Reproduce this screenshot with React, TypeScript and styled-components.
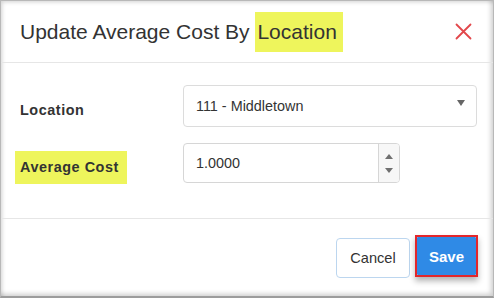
import React from "react";
import styled, { createGlobalStyle } from "styled-components";

const Global = createGlobalStyle`
  html, body { margin: 0; padding: 0; background: #ffffff; }
  body { font-family: "Liberation Sans", Arial, sans-serif; }
  * { box-sizing: border-box; }
`;

const Frame = styled.div`
  width: 494px;
  height: 298px;
  border: 1px solid #b8b8b8;
  border-bottom: 2px solid #9c9c9c;
  box-shadow: inset 3px 3px 4px -2px rgba(0, 0, 0, 0.18),
    inset -4px -4px 5px -2px rgba(0, 0, 0, 0.2);
  display: flex;
  flex-direction: column;
  background: #fff;
  overflow: hidden;
`;

const Header = styled.div`
  height: 62px;
  flex: none;
  display: flex;
  align-items: center;
  padding: 0 21px 0 19px;
  border-bottom: 1px solid #e6e6e6;
`;

const Title = styled.h1`
  margin: 0;
  font-size: 21px;
  font-weight: 400;
  color: #333;
  white-space: nowrap;
`;

const Mark = styled.span<{ $px?: string }>`
  background: #eef55c;
  padding: ${(p) => p.$px ?? "8px 6px 9px 2px"};
`;

const Close = styled.button`
  margin-left: auto;
  border: 0;
  background: transparent;
  padding: 0;
  width: 17px;
  height: 17px;
  display: flex;
  cursor: pointer;
`;

const Body = styled.div`
  padding: 22px 16px 34px 19px;
  display: grid;
  grid-template-columns: 163px 1fr;
  row-gap: 16px;
  border-bottom: 1px solid #e6e6e6;
`;

const Label = styled.div<{ $pad?: number }>`
  display: flex;
  align-items: center;
  padding-top: ${(p) => p.$pad ?? 7}px;
  font-size: 14.4px;
  font-weight: 700;
  letter-spacing: 0.55px;
  color: #333;
`;

const HiLabel = styled.span`
  background: #eef55c;
  padding: 8px 8px 9px 5px;
  margin-left: -5px;
`;

const Select = styled.div`
  height: 42px;
  width: 294px;
  border: 1px solid #dcdcdc;
  border-radius: 4px;
  display: flex;
  align-items: center;
  padding: 0 11px 0 12px;
  font-size: 14.4px;
  color: #333;
`;

const Caret = styled.span`
  margin-left: auto;
  margin-top: -7px;
  width: 0;
  height: 0;
  border-left: 4.5px solid transparent;
  border-right: 4.5px solid transparent;
  border-top: 6px solid #666;
`;

const NumberBox = styled.div`
  height: 40px;
  width: 217px;
  border: 1px solid #d6d6d6;
  border-radius: 4px;
  display: flex;
  align-items: stretch;
  font-size: 14.4px;
  color: #333;
  overflow: hidden;
`;

const NumberValue = styled.div`
  flex: 1;
  display: flex;
  align-items: center;
  padding-left: 12px;
`;

const Spinner = styled.div`
  width: 21px;
  border-left: 1px solid #d6d6d6;
  background: #f7f7f7;
  display: flex;
  flex-direction: column;
  align-items: center;
  justify-content: center;
  gap: 9px;
`;

const Arrow = styled.span<{ $up?: boolean }>`
  width: 0;
  height: 0;
  border-left: 4.5px solid transparent;
  border-right: 4.5px solid transparent;
  ${(p) =>
    p.$up ? "border-bottom: 5px solid #707070;" : "border-top: 5px solid #707070;"}
`;

const Footer = styled.div`
  flex: 1;
  display: flex;
  justify-content: flex-end;
  align-items: flex-start;
  gap: 5px;
  padding: 16px 15px 0 0;
`;

const CancelButton = styled.button`
  margin-top: 3px;
  width: 74px;
  height: 40px;
  border: 1px solid #bcd6ef;
  border-radius: 4px;
  background: #fff;
  font-family: "Liberation Sans", Arial, sans-serif;
  font-size: 14.6px;
  color: #333;
  cursor: pointer;
`;

const SaveOutline = styled.div`
  border: 2px solid #e3262b;
  padding: 0;
  box-shadow: 0 4px 6px rgba(0, 0, 0, 0.3);
`;

const SaveButton = styled.button`
  display: block;
  width: 59px;
  height: 38px;
  border: 0;
  border-radius: 1px;
  background: #2f8ae6;
  color: #fff;
  font-family: "Liberation Sans", Arial, sans-serif;
  font-size: 15px;
  font-weight: 700;
  cursor: pointer;
`;

export default function App() {
  return (
    <>
      <Global />
      <Frame>
        <Header>
          <Title>
            Update Average Cost By <Mark>Location</Mark>
          </Title>
          <Close aria-label="Close">
            <svg width="17" height="17" viewBox="0 0 17 17">
              <path
                d="M1.5 1.5 L15.5 15.5 M15.5 1.5 L1.5 15.5"
                stroke="#e2474b"
                strokeWidth="1.8"
                strokeLinecap="round"
              />
            </svg>
          </Close>
        </Header>
        <Body>
          <Label>Location</Label>
          <Select>
            111 - Middletown
            <Caret />
          </Select>
          <Label $pad={8}>
            <HiLabel>Average Cost</HiLabel>
          </Label>
          <NumberBox>
            <NumberValue>1.0000</NumberValue>
            <Spinner>
              <Arrow $up />
              <Arrow />
            </Spinner>
          </NumberBox>
        </Body>
        <Footer>
          <CancelButton>Cancel</CancelButton>
          <SaveOutline>
            <SaveButton>Save</SaveButton>
          </SaveOutline>
        </Footer>
      </Frame>
    </>
  );
}
